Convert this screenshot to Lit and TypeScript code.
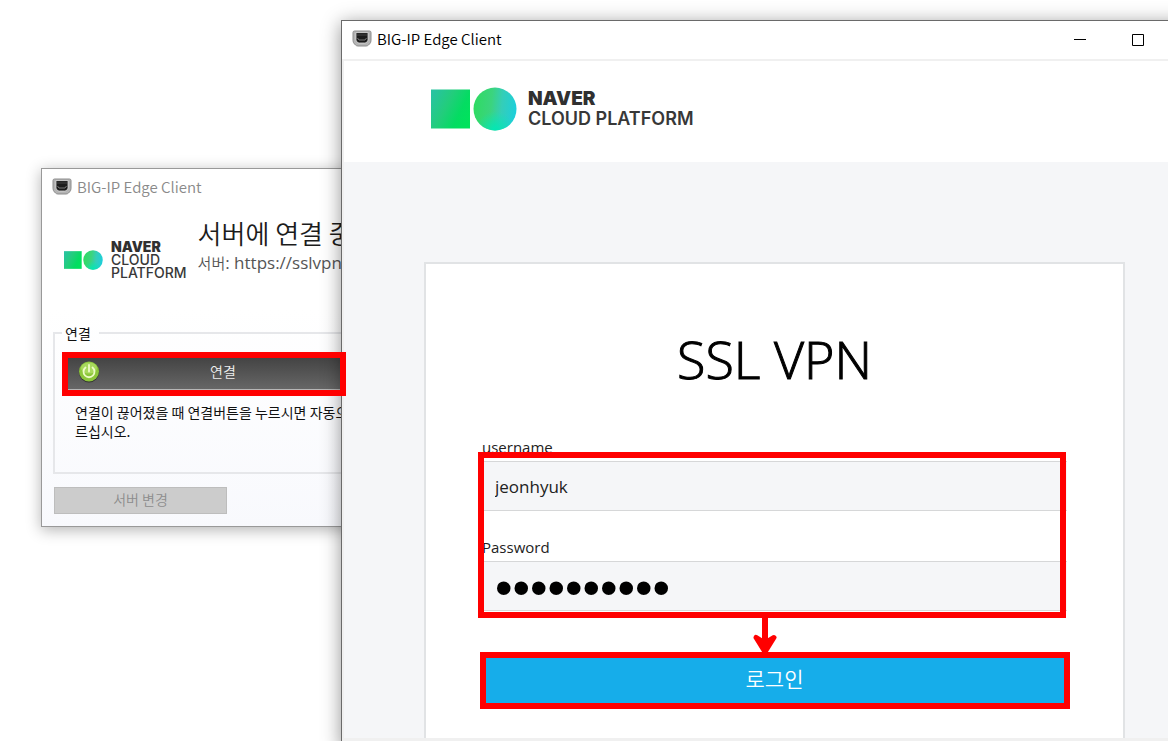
import { LitElement, html, css } from "lit";
import { customElement, property } from "lit/decorators.js";

const clientIcon = html`<svg width="20" height="20" viewBox="0 0 20 20" aria-hidden="true">
  <path d="M2.500 2h15q1.500 0 1.500 1.500v8q0 2-1.500 3.500l-1 1q-1 1-2.500 1h-8q-1.500 0-2.500-1l-1-1q-1.500-1.500-1.500-3.500v-8q0-1.500 1.500-1.500z" fill="#b4b4b4" stroke="#8c8c8c"/>
  <path d="M4 3.500h12v7q0 1.500-1 2.500t-2.500 1h-5q-1.500 0-2.500-1t-1-2.500z" fill="#1c1c1c" stroke="#dcdcdc" stroke-width="0.800"/>
  <path d="M5.500 9l1.500 2h6l1.500-2" fill="none" stroke="#777"/>
  <path d="M5 4.500h10v2.500h-10z" fill="#303030"/>
</svg>`;

@customElement("ncp-logo")
class NcpLogo extends LitElement {
  @property({ type: Boolean, reflect: true }) compact = false;

  static styles = css`
    :host { display: block; }
    .logo { display: flex; align-items: center; gap: 11px; }
    .mark { display: block; width: 86px; height: 44px; flex: none; }
    .name {
      font: 600 18px/20px Inter, "Liberation Sans", sans-serif;
      color: #383838;
      white-space: nowrap;
    }
    .name .brand { font-size: 19px; font-weight: 900; color: #303030; }
    :host([compact]) .logo { gap: 8px; }
    :host([compact]) .mark { width: 39px; height: 20px; }
    :host([compact]) .name { font-size: 14px; line-height: 13px; font-weight: 500; }
    :host([compact]) .name .brand { font-size: 14px; }
  `;

  render() {
    return html`<div class="logo">
      <svg class="mark" viewBox="0 0 86 44" aria-hidden="true">
        <defs>
          <linearGradient id="sq" x1="0" y1="0.200" x2="1" y2="0.700">
            <stop offset="0" stop-color="#28c3a0"/><stop offset="0.400" stop-color="#22cd7c"/><stop offset="0.750" stop-color="#04dc62"/><stop offset="1" stop-color="#00e25c"/>
          </linearGradient>
          <linearGradient id="ci" x1="0" y1="0.450" x2="1" y2="0.550">
            <stop offset="0" stop-color="#2fdb62"/><stop offset="0.400" stop-color="#3bd47e"/><stop offset="0.650" stop-color="#34ceb8"/><stop offset="1" stop-color="#1ccfdc"/>
          </linearGradient>
          <radialGradient id="glow" cx="0.500" cy="1" r="0.450">
            <stop offset="0" stop-color="#00e8b4"/><stop offset="1" stop-color="#00e8b4" stop-opacity="0"/>
          </radialGradient>
        </defs>
        <rect x="0" y="2.500" width="39" height="39" fill="url(#sq)"/>
        <circle cx="64" cy="22" r="21.500" fill="url(#ci)"/>
        <circle cx="64" cy="22" r="21.500" fill="url(#glow)"/>
      </svg>
      <div class="name">
        <div class="brand">NAVER</div>
        ${this.compact ? html`<div>CLOUD</div><div>PLATFORM</div>` : html`<div>CLOUD PLATFORM</div>`}
      </div>
    </div>`;
  }
}

@customElement("app-root")
class AppRoot extends LitElement {
  static styles = css`
    :host {
      display: block;
      position: relative;
      height: 100vh;
      overflow: hidden;
      background: #fff;
      color: #222;
      font-family: "Open Sans", "Noto Sans CJK KR", sans-serif;
    }
    * { box-sizing: border-box; }
    h1, h2, p { margin: 0; font-weight: 400; }
    button, input { font-family: inherit; border-radius: 0; margin: 0; }

    .window { position: absolute; background: #fff; }
    .title-bar { display: flex; align-items: center; height: 38px; padding: 0 10px 2px; }
    .title-bar svg { display: block; flex: none; }
    .title-bar .caption {
      margin-left: 5px; flex: 1; white-space: nowrap;
      font: 350 15px/20px "Noto Sans CJK KR", sans-serif;
    }

    .status {
      left: 41px; top: 168px; width: 361px;
      border: 1px solid #999;
      box-shadow: 0 3px 14px rgba(0, 0, 0, 0.3);
      background: linear-gradient(#fff 140px, #f8f9fd 360px);
      padding-bottom: 12px;
    }
    .status .caption { color: #8a8a8a; }
    .server { display: flex; gap: 11px; padding: 8px 0 0 22px; height: 109px; }
    .server ncp-logo { padding-top: 25px; flex: none; }
    .server h2 { font-size: 26px; line-height: 36px; white-space: nowrap; color: #1c1c1c; }
    .server p { font-size: 17px; line-height: 24px; white-space: nowrap; color: #555; }
    .server p .korean { font-size: 15px; }
    .korean { font-family: "Noto Sans CJK KR", sans-serif; font-weight: 350; }

    .group {
      margin: 7px 8px 0 11px; padding: 0 11px 31px 11px;
      border: 2px solid #e6e7ea;
    }
    .group legend { padding: 0 8px 0 3px; margin-left: -4px; font: 14px/20px "Noto Sans CJK KR", sans-serif; color: #111; }
    .connect {
      position: relative;
      display: block; width: 100%; height: 34px; margin-top: 14px;
      border: 1px solid #444; border-bottom: 2px solid #b5b5b5;
      background: linear-gradient(#444, #666);
      color: #eee; font-size: 14px; line-height: 20px; padding: 0 0 6px;
    }
    .connect svg { position: absolute; left: 11px; top: 3px; }
    .hint { margin-top: 12px; padding-left: 9px; font: 14px/19px "Noto Sans CJK KR", sans-serif; white-space: nowrap; color: #111; }
    .change {
      display: block; width: 173px; height: 27px; margin: 13px 0 0 12px; padding: 0 0 4px;
      border: 1px solid #bdbdbd; background: #ccc; color: #8c8c8c;
      font-size: 14px; line-height: 20px;
    }

    .login {
      left: 341px; top: 20px; right: -40px;
      border: 1px solid #6a6a6a;
      box-shadow: 0 3px 18px rgba(0, 0, 0, 0.42);
      padding-bottom: 8px;
      background: #f0f0f0;
    }
    .login .title-bar { background: #fff; color: #000; padding-right: 48px; }
    .controls { display: flex; gap: 16px; }
    .controls button { width: 42px; height: 30px; padding: 0; border: 0; background: none; display: grid; place-items: center; }
    .page { margin: 2px 2px 0; background: #f5f6f8; }
    .page header { background: #fff; height: 101px; padding: 26px 0 0 87px; }
    .card {
      margin: 100px 80px 0; padding: 59px 56px 34px;
      border: 2px solid #e1e3e5; border-bottom: 0; background: #fff;
    }
    .card h1 { font-size: 52px; line-height: 72px; font-weight: 300; text-align: center; color: #000; -webkit-text-stroke: 1px #000; }
    form { margin-top: 42px; }
    .fields { position: relative; display: grid; }
    .fields label { font-size: 15px; line-height: 20px; margin-bottom: 4px; }
    .fields input {
      width: 100%; height: 50px; padding: 0 13px; outline: 0;
      border: 1px solid #d6d7d8; border-width: 1px 0;
      background: #f5f6f8; color: #222; font-size: 17px;
    }
    .fields .user { margin-bottom: 26px; }
    .fields .secret { padding-top: 4px; font: 50px/44px "Liberation Sans", sans-serif; color: #000; }
    .submit {
      display: block; width: 100%; height: 47px; padding: 0 0 5px; margin-top: 46px;
      border: 0; background: #16adea; color: #fff; font-size: 21px; line-height: 28px;
    }
    .action { position: relative; }

    .mark { position: absolute; border: 6px solid #f00; pointer-events: none; }
    .mark-fields { inset: 15px 1px -7px -4px; }
    .mark-submit { inset: -5px -3px -5px -2px; }
    .mark-connect { left: 62px; top: 352px; width: 284px; height: 44px; }
    .arrow { position: absolute; left: calc(50% - 22px); top: -39px; pointer-events: none; }
  `;

  render() {
    return html`
      <section class="window status" aria-label="Connection status">
        <div class="title-bar">${clientIcon}<span class="caption">BIG-IP Edge Client</span></div>
        <div class="server">
          <ncp-logo compact></ncp-logo>
          <div>
            <h2 class="korean">서버에 연결 중</h2>
            <p><span class="korean">서버</span>: https://sslvpn</p>
          </div>
        </div>
        <fieldset class="group">
          <legend>연결</legend>
          <button class="connect korean" type="button">
            <svg width="22" height="22" viewBox="0 0 22 22" aria-hidden="true">
              <circle cx="11" cy="11.500" r="10" fill="#333"/>
              <circle cx="11" cy="10.500" r="10" fill="#8cc63a"/>
              <ellipse cx="11" cy="7" rx="8" ry="5.500" fill="#a8d95c"/>
              <path d="M7.500 6.500a5.500 5.500 0 1 0 7 0M11 4v6.500" fill="none" stroke="#eefbc8" stroke-width="1.800" stroke-linecap="round"/>
            </svg>
            연결
          </button>
          <p class="hint">연결이 끊어졌을 때 연결버튼을 누르시면 자동으<br>르십시오.</p>
        </fieldset>
        <button class="change korean" type="button" disabled>서버 변경</button>
      </section>

      <section class="window login" aria-label="Login">
        <div class="title-bar">
          ${clientIcon}<span class="caption">BIG-IP Edge Client</span>
          <div class="controls">
            <button type="button" aria-label="Minimize"><svg width="12" height="12"><path d="M0 6.500h12" stroke="#000"/></svg></button>
            <button type="button" aria-label="Maximize"><svg width="12" height="14"><path d="M.5 2.500h11v11h-11z" fill="none" stroke="#000"/></svg></button>
          </div>
        </div>
        <div class="page">
          <header><ncp-logo></ncp-logo></header>
          <main class="card">
            <h1>SSL VPN</h1>
            <form @submit=${(e: Event) => e.preventDefault()}>
              <div class="fields">
                <label for="user">username</label>
                <input class="user" id="user" type="text" .value=${"jeonhyuk"}>
                <label for="secret">Password</label>
                <input class="secret" id="secret" type="password" .value=${"0123456789"}>
                <div class="mark mark-fields"></div>
              </div>
              <div class="action">
                <button class="submit korean" type="submit">로그인</button>
                <div class="mark mark-submit"></div>
                <svg class="arrow" width="24" height="40" viewBox="0 0 24 40" aria-hidden="true">
                  <path d="M12 0v28" stroke="#f00" stroke-width="6"/>
                  <path d="M3 19.500L12 34L21 19.500L12 25z" fill="#f00" stroke="#f00" stroke-width="5" stroke-linejoin="round"/>
                </svg>
              </div>
            </form>
          </main>
        </div>
      </section>
      <div class="mark mark-connect"></div>
    `;
  }
}
